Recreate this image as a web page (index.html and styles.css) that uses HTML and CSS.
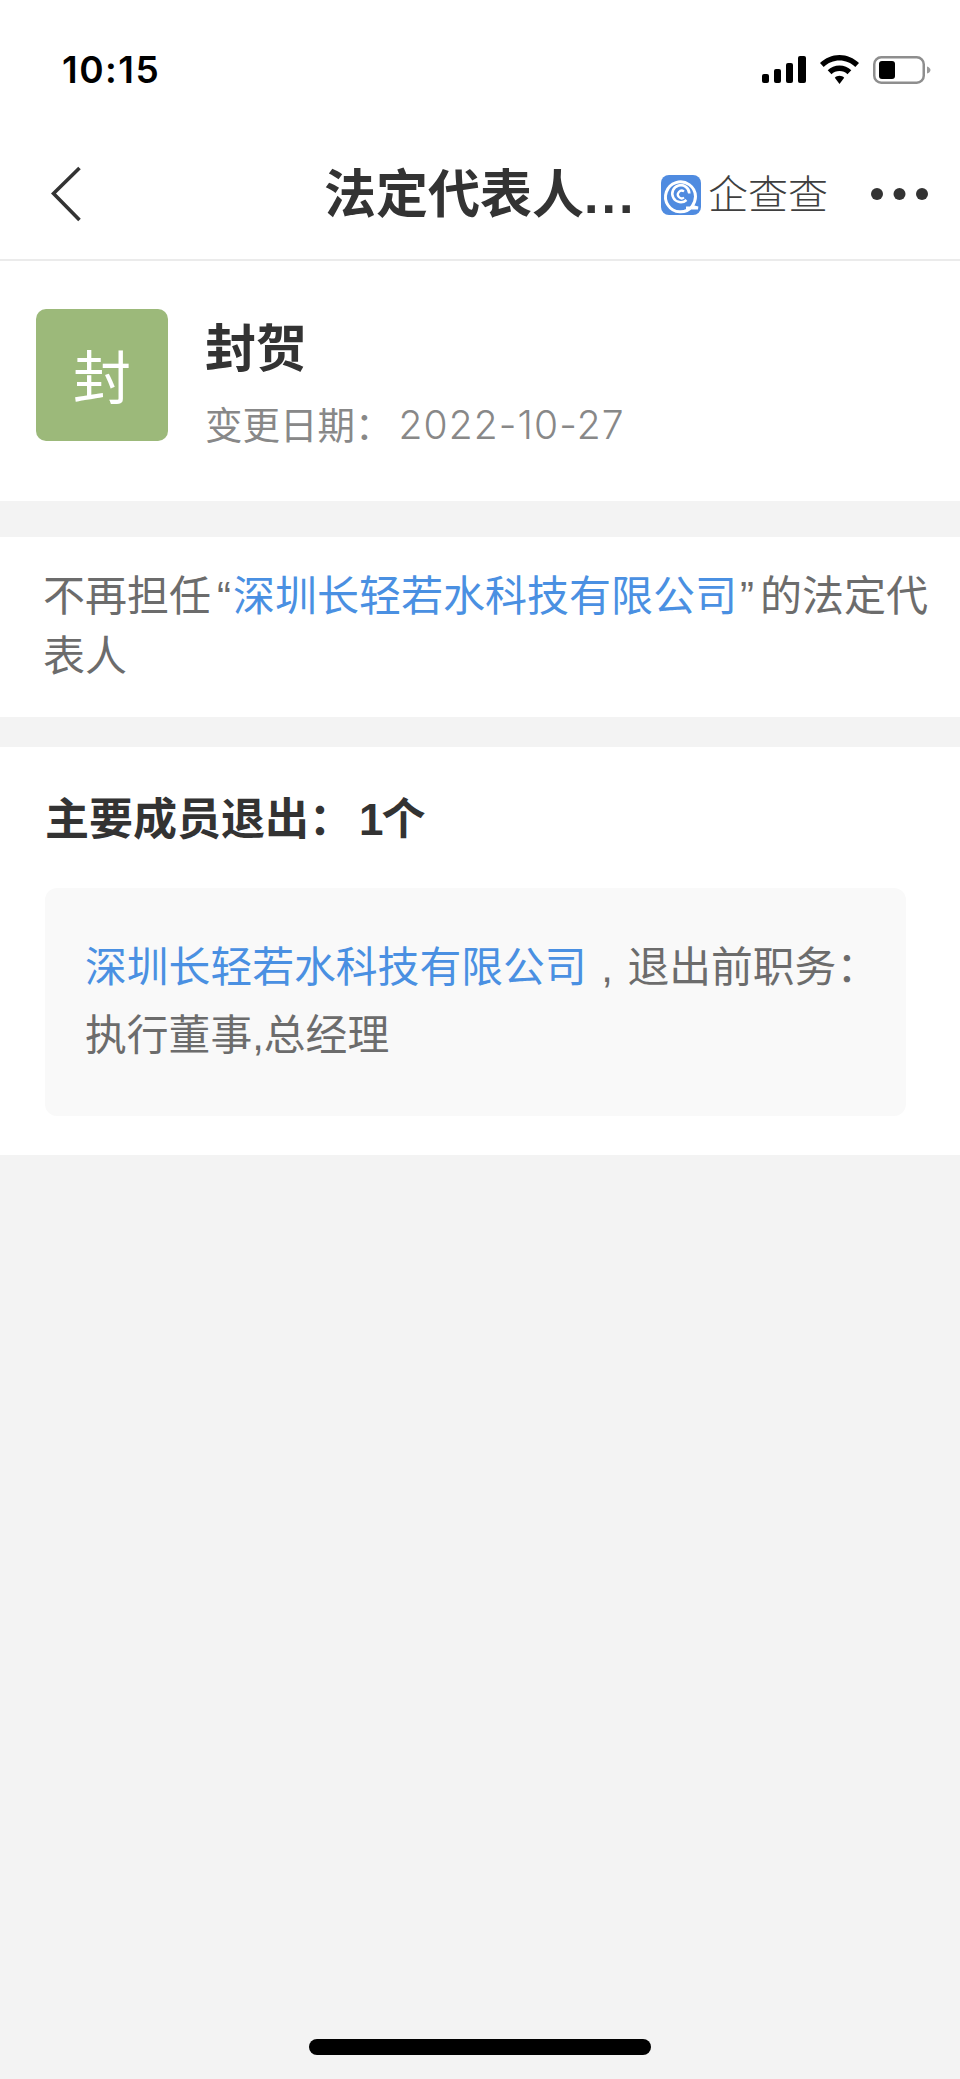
FILE: index.html
```html
<!DOCTYPE html>
<html lang="zh-CN">
<head>
<meta charset="utf-8">
<title>法定代表人</title>
<link rel="stylesheet" href="styles.css">
</head>
<body>
<div class="page">
  <header class="top">
    <div class="status">
      <span class="time">10:15</span>
      <div class="status-icons">
        <svg class="signal" width="44" height="27" viewBox="0 0 44 27"><rect x="0" y="18" width="7" height="9" rx="2"/><rect x="12" y="13" width="7" height="14" rx="2"/><rect x="24" y="7" width="7" height="20" rx="2"/><rect x="36" y="0" width="8" height="27" rx="2"/></svg>
        <svg class="wifi" width="39" height="29" viewBox="0 0 39 29"><path d="M19.500 0C27 0 33.700 3 39 8L35.300 12C31 8 25.500 5.600 19.500 5.600C13.500 5.600 8 8 3.700 12L0 8C5.300 3 12 0 19.500 0Z"/><path d="M19.500 10.500C24 10.500 28.200 12.200 31.300 15.200L27.500 19.200C25.400 17.200 22.600 16 19.500 16C16.400 16 13.600 17.200 11.500 19.200L7.700 15.200C10.800 12.200 15 10.500 19.500 10.500Z"/><path d="M19.500 20.800C21.300 20.800 23 21.500 24.200 22.700L19.500 29L14.800 22.700C16 21.500 17.700 20.800 19.500 20.800Z"/></svg>
        <svg class="battery" width="58" height="28" viewBox="0 0 58 28"><rect x="1.250" y="1.250" width="49.500" height="25.500" rx="7" fill="none" stroke="#8e8e8e" stroke-width="2.500"/><rect x="6" y="5" width="16" height="18" rx="3"/><path d="M54 10.500C56 11 57.500 12.500 57.500 14C57.500 15.500 56 17 54 17.500Z" fill="#9a9a9a"/></svg>
      </div>
    </div>
    <nav class="nav">
      <svg class="back" width="30" height="56" viewBox="0 0 30 56"><path d="M28.500 2L2.500 27.500L28.500 54" fill="none" stroke="#333" stroke-width="3.600"/></svg>
      <h1 class="nav-title">法定代表人<span class="more-dots">...</span></h1>
      <div class="brand">
        <svg class="brand-icon" width="40" height="40" viewBox="0 0 40 40"><rect width="40" height="40" rx="8" fill="#4f8be0"/><g fill="none" stroke="#fff"><path d="M31 31.500A15 15 0 1 1 34.500 21.500C34.500 25 33 28.500 31 31.500L37 33H25" stroke-width="3"/><path d="M25.500 25A8.500 8.500 0 1 1 28.300 18.500" stroke-width="2.600"/><path d="M23 16.500A3.800 3.800 0 1 0 23 22.500" stroke-width="2.200"/></g></svg>
        <span class="brand-name">企查查</span>
      </div>
      <svg class="menu" width="57" height="12" viewBox="0 0 57 12"><circle cx="6" cy="6" r="6"/><circle cx="28.500" cy="6" r="6"/><circle cx="51" cy="6" r="6"/></svg>
    </nav>
  </header>

  <section class="person">
    <div class="avatar">封</div>
    <div class="person-info">
      <div class="person-name">封贺</div>
      <div class="person-date">变更日期：<span class="date-value">2022-10-27</span></div>
    </div>
  </section>

  <section class="notice">
    <p class="notice-text">不再担任<span class="quote-open">“</span><a class="link">深圳长轻若水科技有限公司</a><span class="quote-close">”</span>的法定代表人</p>
  </section>

  <section class="members">
    <h2 class="members-title">主要成员退出：<span class="members-count">1个</span></h2>
    <div class="member-card">
      <a class="link">深圳长轻若水科技有限公司</a> , 退出前职务：<br>执行董事,总经理
    </div>
  </section>

  <div class="home-bar"></div>
</div>
</body>
</html>
```
FILE: styles.css
```css
* { box-sizing: border-box; }
html, body { margin: 0; padding: 0; }
body {
  font-family: "Liberation Sans", "Noto Sans CJK SC", sans-serif;
  background: #f3f3f3;
}
.page {
  position: relative;
  width: 960px;
  height: 2079px;
  background: #f3f3f3;
  overflow: hidden;
}
.top {
  height: 261px;
  background: #fff;
  border-bottom: 2px solid #ebebeb;
}
.status {
  height: 112px;
  padding: 50px 29px 0 62px;
  display: flex;
  justify-content: space-between;
  align-items: flex-start;
}
.time {
  font-family: Inter, sans-serif;
  font-weight: 600;
  font-size: 37px;
  line-height: 40px;
  letter-spacing: 1.500px;
  color: #000;
}
.status-icons {
  display: flex;
  align-items: center;
  gap: 14px;
  margin-top: 5px;
}
.signal, .wifi, .battery { display: block; fill: #000; }
.nav {
  height: 147px;
  display: flex;
  align-items: center;
  padding: 17px 32px 0 51px;
}
.back { display: block; margin-right: 243px; flex: none; }
.nav-title {
  margin: 2px 0 0;
  width: 337px;
  font-size: 52px;
  font-weight: 700;
  color: #333;
  line-height: 60px;
  white-space: nowrap;
  flex: none;
}
.more-dots { letter-spacing: 3px; }
.brand { display: flex; align-items: center; gap: 7px; flex: none; margin-top: 2px; }
.brand-icon { display: block; }
.brand-name {
  font-size: 40px;
  line-height: 44px;
  color: #3f3f3f;
  font-weight: 300;
}
.menu { display: block; fill: #333; margin-left: auto; }

.person {
  height: 240px;
  background: #fff;
  padding: 48px 36px 0;
  display: flex;
  align-items: flex-start;
  gap: 37px;
}
.avatar {
  width: 132px;
  height: 132px;
  border-radius: 10px;
  background: #9cb97a;
  color: #fff;
  font-size: 58px;
  padding-bottom: 2px;
  display: flex;
  align-items: center;
  justify-content: center;
  flex: none;
}
.person-name {
  font-size: 51px;
  line-height: 60px;
  font-weight: 700;
  color: #333;
  margin-top: 11px;
}
.person-date {
  font-size: 37.500px;
  line-height: 50px;
  color: #888;
  margin-top: 20px;
}
.date-value {
  font-family: Inter, "Liberation Sans", sans-serif;
  font-weight: 300;
  font-size: 39px;
  letter-spacing: 1.100px;
  margin-left: 6px;
}

.notice {
  margin-top: 36px;
  height: 180px;
  background: #fff;
  padding: 30px 30px 0 43px;
}
.notice-text {
  margin: 0;
  font-size: 42px;
  line-height: 60px;
  color: #6c6c6c;
}
.quote-open { margin-left: 6px; margin-right: 2px; }
.quote-close { margin-left: 3px; margin-right: 6px; }
.link { color: #4a90e2; }

.members {
  margin-top: 30px;
  height: 408px;
  background: #fff;
  padding: 43px 54px 0 45px;
}
.members-title {
  margin: 0 0 38px;
  font-size: 44px;
  line-height: 60px;
  font-weight: 700;
  color: #333;
}
.members-count { margin-left: 6px; letter-spacing: -2px; }
.member-card {
  height: 228px;
  background: #f9f9f9;
  border-radius: 12px;
  padding: 46px 20px 0 40px;
  font-size: 41.800px;
  line-height: 68px;
  color: #6c6c6c;
  white-space: nowrap;
  word-spacing: 3px;
}
.home-bar {
  position: absolute;
  left: 309px;
  top: 2039px;
  width: 342px;
  height: 16px;
  border-radius: 8px;
  background: #000;
}
```
